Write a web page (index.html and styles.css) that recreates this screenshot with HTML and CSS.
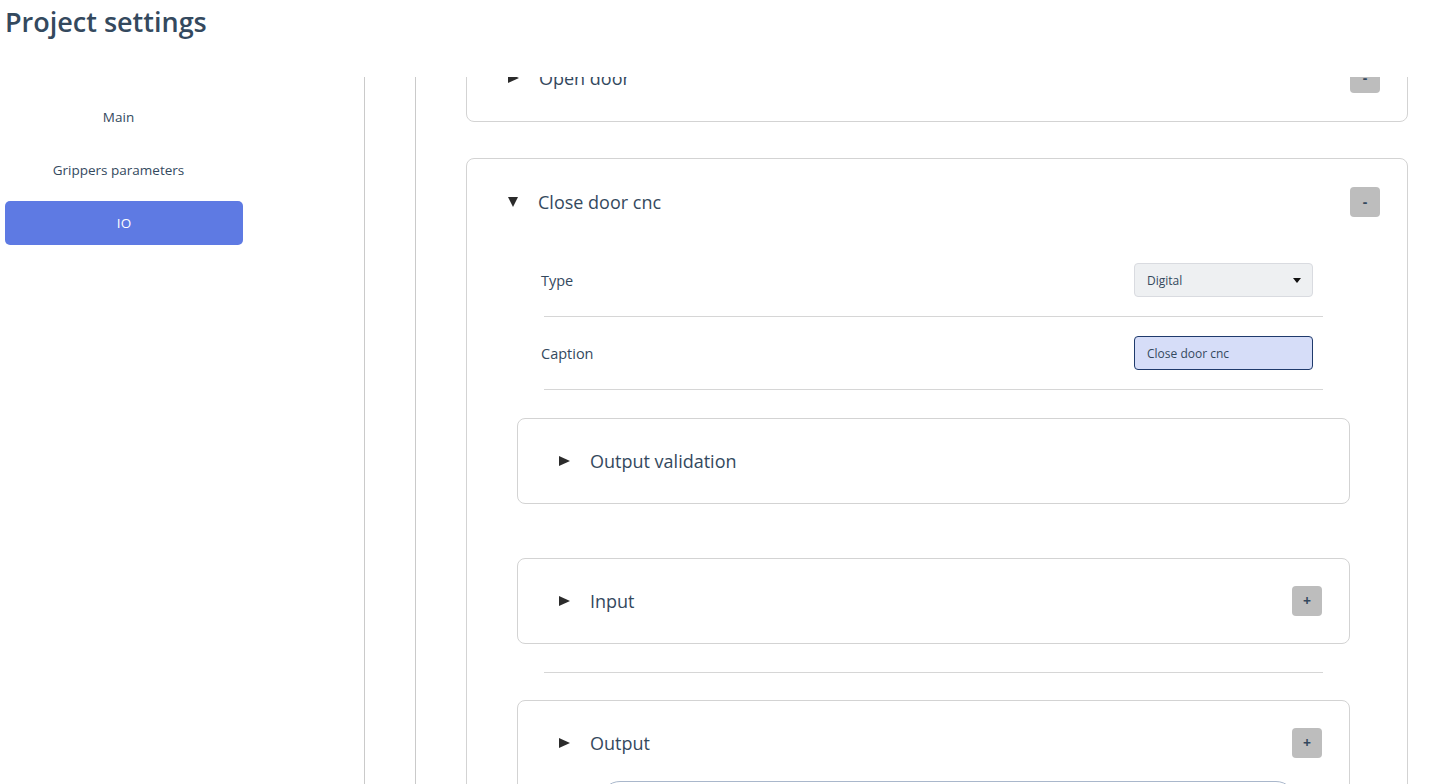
FILE: index.html
```html
<!DOCTYPE html>
<html lang="en">
<head>
<meta charset="utf-8">
<title>Project settings</title>
<link rel="stylesheet" href="styles.css">
</head>
<body>
<div class="page">
  <header class="top">
    <h1 class="title">Project settings</h1>
  </header>
  <div class="layout">
    <nav class="sidebar">
      <a class="nav-item">Main</a>
      <a class="nav-item">Grippers parameters</a>
      <a class="nav-item active">IO</a>
    </nav>
    <main class="main">
      <div class="main-inner">
        <div class="cards">
          <section class="card">
            <div class="card-head">
              <span class="tri tri-right"></span>
              <span class="card-title">Open door</span>
              <button class="sq-btn">-</button>
            </div>
          </section>

          <section class="card">
            <div class="card-head">
              <span class="tri tri-down"></span>
              <span class="card-title">Close door cnc</span>
              <button class="sq-btn">-</button>
            </div>
            <div class="card-body">
              <div class="field-row">
                <span class="field-label">Type</span>
                <div class="select">
                  <span>Digital</span>
                  <span class="caret"></span>
                </div>
              </div>
              <div class="field-row">
                <span class="field-label">Caption</span>
                <div class="text-input">Close door cnc</div>
              </div>

              <section class="sub-card first">
                <div class="card-head">
                  <span class="tri tri-right"></span>
                  <span class="card-title">Output validation</span>
                </div>
              </section>

              <section class="sub-card spaced">
                <div class="card-head">
                  <span class="tri tri-right"></span>
                  <span class="card-title">Input</span>
                  <button class="sq-btn">+</button>
                </div>
              </section>

              <div class="divider"></div>

              <section class="sub-card">
                <div class="card-head">
                  <span class="tri tri-right"></span>
                  <span class="card-title">Output</span>
                  <button class="sq-btn">+</button>
                </div>
                <div class="pill"></div>
              </section>
            </div>
          </section>
        </div>
      </div>
    </main>
  </div>
</div>
</body>
</html>
```

FILE: styles.css
```css
* { box-sizing: border-box; }

html, body {
  margin: 0;
  padding: 0;
  height: 100%;
  background: #ffffff;
  font-family: "Open Sans", "Noto Sans", sans-serif;
  color: #34495e;
  overflow: hidden;
}

.page {
  display: flex;
  flex-direction: column;
  height: 100vh;
}

.top {
  height: 77px;
  flex: none;
  padding: 3px 5px 0;
}

.title {
  margin: 0;
  font-size: 27px;
  line-height: 38px;
  font-weight: 600;
  color: #34495e;
}

.layout {
  flex: 1;
  display: flex;
  min-height: 0;
}

.sidebar {
  width: 365px;
  flex: none;
  border-right: 1px solid #cacaca;
  padding-top: 18px;
  display: flex;
  flex-direction: column;
  gap: 9px;
}

.nav-item {
  display: block;
  width: 237px;
  height: 44px;
  line-height: 44px;
  text-align: center;
  font-size: 13.5px;
  color: #34495e;
  border-radius: 5px;
}

.nav-item.active {
  width: 238px;
  margin-left: 5px;
  background: #5e7ae3;
  color: #ffffff;
}

.main {
  flex: 1;
  padding-left: 50px;
  min-width: 0;
}

.main-inner {
  height: 100%;
  border-left: 1px solid #cacaca;
  padding: 0 28px 0 50px;
  overflow: hidden;
}

.cards {
  margin-top: -43px;
  display: flex;
  flex-direction: column;
  gap: 36px;
}

.card {
  border: 1px solid #d3d3d3;
  border-radius: 8px;
  padding: 28px 27px;
}

.card-head {
  display: flex;
  align-items: center;
  height: 30px;
  padding-left: 14px;
}

.card-title {
  flex: 1;
  font-size: 18px;
  color: #34495e;
}

.tri {
  width: 0;
  height: 0;
  margin-right: 20px;
  flex: none;
}

.tri-right {
  border-top: 5px solid transparent;
  border-bottom: 5px solid transparent;
  border-left: 11px solid #2b2b2b;
}

.tri-down {
  border-left: 5.5px solid transparent;
  border-right: 5.5px solid transparent;
  border-top: 10px solid #2b2b2b;
}

.sq-btn {
  width: 30px;
  height: 30px;
  border: none;
  border-radius: 4px;
  background: #bdbdbd;
  color: #34495e;
  font-family: "Open Sans", sans-serif;
  font-size: 14px;
  font-weight: 700;
  padding: 0;
  line-height: 30px;
  text-align: center;
}

.card-body {
  margin-top: 27px;
  padding: 0 30px 0 23px;
}

.field-row {
  display: flex;
  align-items: center;
  justify-content: space-between;
  margin: 0 27px;
  padding: 19px 10px 19px 0;
  border-bottom: 1px solid #d6d6d6;
}

.field-label {
  font-size: 14.5px;
  margin-left: -3px;
  color: #34495e;
}

.select, .text-input {
  width: 179px;
  height: 34px;
  border-radius: 4px;
  font-size: 12px;
  padding: 0 12px;
  display: flex;
  align-items: center;
}

.select {
  background: #eef0f2;
  border: 1px solid #d9dbe0;
  justify-content: space-between;
}

.caret {
  width: 0;
  height: 0;
  border-left: 4.5px solid transparent;
  border-right: 4.5px solid transparent;
  border-top: 5px solid #111111;
  margin-right: -1px;
}

.text-input {
  background: #d6ddf8;
  border: 1px solid #1f3a6c;
}

.sub-card {
  border: 1px solid #d3d3d3;
  border-radius: 8px;
  padding: 27px;
}

.sub-card.first {
  margin-top: 28px;
}

.sub-card.spaced {
  margin-top: 54px;
}

.divider {
  margin: 28px 27px 27px;
  border-top: 1px solid #d6d6d6;
}

.pill {
  margin: 23px 26px 0 55px;
  height: 40px;
  border: 1px solid #a9b7cb;
  border-radius: 20px;
}
```
